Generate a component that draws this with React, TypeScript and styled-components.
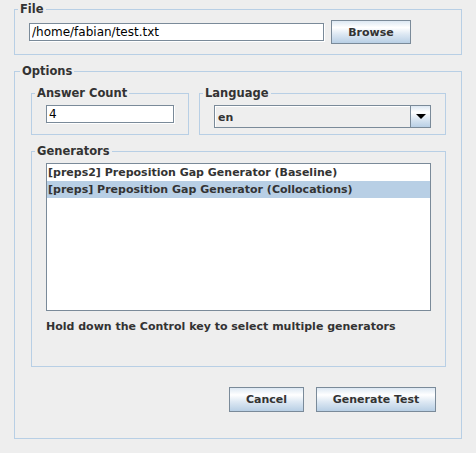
import React from "react";
import styled, { createGlobalStyle } from "styled-components";

const GlobalStyle = createGlobalStyle`
  html, body {
    margin: 0;
    padding: 0;
    background: #eeeeee;
  }
  * {
    box-sizing: border-box;
  }
`;

const metalGradient = `linear-gradient(
  to bottom,
  #dde8f3 0%,
  #ffffff 30%,
  #dde8f3 60%,
  #b8cfe5 100%
)`;

const generators = [
  "[preps2] Preposition Gap Generator (Baseline)",
  "[preps] Preposition Gap Generator (Collocations)",
];

const App = () => {
  return (
    <>
      <GlobalStyle />
      <Dialog>
        <FileBox>
          <Title>File</Title>
          <FileRow>
            <TextField defaultValue="/home/fabian/test.txt" />
            <Button width={80} height={24}>
              Browse
            </Button>
          </FileRow>
        </FileBox>

        <OptionsBox>
          <Title>Options</Title>
          <TopRow>
            <AnswerBox>
              <Title>Answer Count</Title>
              <TextField defaultValue="4" />
            </AnswerBox>
            <LanguageBox>
              <Title>Language</Title>
              <Combo>
                <ComboValue>en</ComboValue>
                <ComboArrow>
                  <svg width="10" height="5" viewBox="0 0 10 5">
                    <path d="M0 0h10L5 5z" fill="#000" />
                  </svg>
                </ComboArrow>
              </Combo>
            </LanguageBox>
          </TopRow>

          <GeneratorsBox>
            <Title>Generators</Title>
            <List>
              {generators.map((g, i) => (
                <ListRow key={g} selected={i === 1}>
                  {g}
                </ListRow>
              ))}
            </List>
            <Hint>Hold down the Control key to select multiple generators</Hint>
          </GeneratorsBox>

          <ButtonRow>
            <Button width={75} height={25}>
              Cancel
            </Button>
            <Button width={120} height={25}>
              Generate Test
            </Button>
          </ButtonRow>
        </OptionsBox>
      </Dialog>
    </>
  );
};
export default App;

const Dialog = styled.div`
  width: 476px;
  height: 453px;
  padding: 2px 14px 0 14px;
  background: #eeeeee;
  font-family: "DejaVu Sans", "Liberation Sans", sans-serif;
  font-size: 11px;
  font-weight: bold;
  color: #333333;
  overflow: hidden;
`;

const Box = styled.fieldset`
  margin: 0;
  min-width: 0;
  border: 1px solid #b8cfe5;
`;

const Title = styled.legend`
  margin-left: -11px;
  padding: 0 2px;
  line-height: 15px;
  font-size: 11.5px;
  font-weight: bold;
  color: #333333;
`;

const FileBox = styled(Box)`
  padding: 3px 14px 10px 14px;
`;

const FileRow = styled.div`
  display: flex;
  align-items: center;
  gap: 7px;
  & > input {
    width: 295px;
  }
`;

const TextField = styled.input`
  height: 18px;
  width: 100%;
  margin: 0;
  padding: 0 2px;
  border: 1px solid #7a8a99;
  box-shadow: 1px 1px 0 #ffffff;
  background: #ffffff;
  font-family: "DejaVu Sans", "Liberation Sans", sans-serif;
  font-size: 12px;
  font-weight: normal;
  color: #000000;
  outline: none;
`;

const Button = styled.button<{ width: number; height: number }>`
  width: ${(p) => p.width}px;
  height: ${(p) => p.height}px;
  margin: 0;
  padding: 0;
  border: 1px solid #7a8a99;
  background: ${metalGradient};
  font-family: "DejaVu Sans", "Liberation Sans", sans-serif;
  font-size: 11px;
  font-weight: bold;
  color: #333333;
  cursor: pointer;
`;

const OptionsBox = styled(Box)`
  margin-top: 9px;
  padding: 7px 15px 26px 16px;
`;

const TopRow = styled.div`
  display: grid;
  grid-template-columns: 158px 1fr;
  column-gap: 10px;
  align-items: stretch;
`;

const AnswerBox = styled(Box)`
  padding: 4px 14px 6px 14px;
`;

const LanguageBox = styled(Box)`
  padding: 4px 14px 6px 14px;
`;

const Combo = styled.div`
  display: flex;
  height: 23px;
  border: 1px solid #7a8a99;
  background: #eeeeee;
`;

const ComboValue = styled.div`
  flex: 1;
  display: flex;
  align-items: center;
  padding-left: 2px;
  border-top: 1px solid #ffffff;
  border-left: 1px solid #ffffff;
  font-size: 11px;
  font-weight: bold;
  color: #333333;
`;

const ComboArrow = styled.div`
  width: 20px;
  display: flex;
  align-items: center;
  justify-content: center;
  border-left: 1px solid #7a8a99;
  background: ${metalGradient};
`;

const GeneratorsBox = styled(Box)`
  margin-top: 9px;
  padding: 4px 14px 0 14px;
  height: 223px;
`;

const List = styled.div`
  height: 148px;
  border: 1px solid #7a8a99;
  background: #ffffff;
`;

const ListRow = styled.div<{ selected?: boolean }>`
  height: 17px;
  line-height: 17px;
  padding-left: 1px;
  white-space: nowrap;
  color: #333333;
  background: ${(p) => (p.selected ? "#b8cfe5" : "transparent")};
`;

const Hint = styled.div`
  margin-top: 8px;
  line-height: 15px;
  white-space: nowrap;
`;

const ButtonRow = styled.div`
  display: flex;
  justify-content: flex-end;
  gap: 12px;
  margin-top: 20px;
  padding-right: 10px;
`;
